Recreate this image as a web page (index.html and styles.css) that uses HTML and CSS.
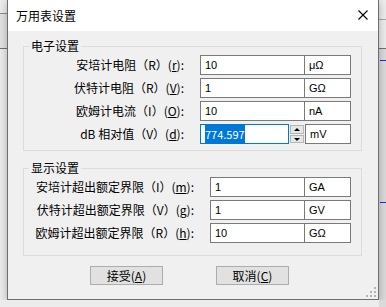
FILE: index.html
```html
<!DOCTYPE html>
<html lang="zh-CN">
<head>
    <meta charset="UTF-8">
    <title>万用表设置</title>
    <link rel="stylesheet" href="styles.css">
</head>
<body>
    <div class="window">

        <div class="titlebar">
            <span class="title">万用表设置</span>
            <svg class="close" width="10" height="10" viewBox="0 0 10 10">
                <path d="M0.5 0.5 L9.5 9.5 M9.5 0.5 L0.5 9.5" stroke="#000" stroke-width="1.1" fill="none"/>
            </svg>
        </div>

        <div class="client">
            <fieldset class="group electric">
                <legend>电子设置</legend>
                <div class="row">
                    <label>安培计电阻（R）(<u>r</u>):</label>
                    <span class="field">10</span>
                    <span class="unit">μΩ</span>
                </div>
                <div class="row">
                    <label>伏特计电阻（R）(<u>V</u>):</label>
                    <span class="field">1</span>
                    <span class="unit">GΩ</span>
                </div>
                <div class="row">
                    <label>欧姆计电流（I）(<u>O</u>):</label>
                    <span class="field">10</span>
                    <span class="unit">nA</span>
                </div>
                <div class="row">
                    <label>dB 相对值（V）(<u>d</u>):</label>
                    <span class="field short focused"><span class="selected">774.597</span></span>
                    <span class="spin">
                        <span class="up"></span>
                        <span class="down"></span>
                    </span>
                    <span class="unit spaced">mV</span>
                </div>
            </fieldset>

            <fieldset class="group display">
                <legend>显示设置</legend>
                <div class="row">
                    <label>安培计超出额定界限（I）(<u>m</u>):</label>
                    <span class="field">1</span>
                    <span class="unit">GA</span>
                </div>
                <div class="row">
                    <label>伏特计超出额定界限（V）(<u>g</u>):</label>
                    <span class="field">1</span>
                    <span class="unit">GV</span>
                </div>
                <div class="row">
                    <label>欧姆计超出额定界限（R）(<u>h</u>):</label>
                    <span class="field">10</span>
                    <span class="unit">GΩ</span>
                </div>
            </fieldset>

            <div class="buttons">
                <button>接受(<u>A</u>)</button>
                <button>取消(<u>C</u>)</button>
            </div>

            <svg class="grip" width="11" height="11" viewBox="0 0 11 11">
                <rect x="8" y="0" width="2" height="2" fill="#b4b4b4"/>
                <rect x="4" y="4" width="2" height="2" fill="#b4b4b4"/>
                <rect x="8" y="4" width="2" height="2" fill="#b4b4b4"/>
                <rect x="0" y="8" width="2" height="2" fill="#b4b4b4"/>
                <rect x="4" y="8" width="2" height="2" fill="#b4b4b4"/>
                <rect x="8" y="8" width="2" height="2" fill="#b4b4b4"/>
            </svg>
        </div>

    </div>
</body>
</html>
```
FILE: styles.css
```css
* {
    font-family: "Noto Sans CJK SC", "Microsoft YaHei", sans-serif;
    box-sizing: border-box;
}

body {
    margin: 0;
    overflow: hidden;
    /* the desktop behind the dialog */
    background:
        linear-gradient(#1f2fe0, #1f2fe0) 380px 60px / 6px 1px no-repeat,
        linear-gradient(#1f2fe0, #1f2fe0) 380px 202px / 6px 1px no-repeat,
        linear-gradient(#8c8c8c, #8c8c8c) 0 13px / 7px 1px no-repeat,
        linear-gradient(#a8a8a8, #a8a8a8) 379px 19px / 7px 1px no-repeat,
        linear-gradient(#707070, #707070) 0 48px / 100% 1px no-repeat,
        linear-gradient(#e2e2e2, #e2e2e2) 0 14px / 7px 34px no-repeat,
        linear-gradient(#dadada, #dadada) 379px 49px / 7px 100% no-repeat,
        #ececec;
}

.window {
    margin-left: 7px;
    width: 372px;
    height: 300px;
    border: 1px solid #6e6e6e;
    border-top: none;
    background: #f0f0f0;
    box-shadow: 0 2px 8px rgba(0, 0, 0, 0.28);
}

.titlebar {
    height: 31px;
    background: white;
    display: flex;
    align-items: center;
    justify-content: space-between;
    padding: 0 10px 1px 8px;
}

.title {
    font-size: 12px;
    color: black;
}

.client {
    position: relative;
    height: 268px;
    padding: 7px 16px 0 15px;
}

.group {
    margin: 0;
    padding: 1px 0 6px 0;
    border: 1px solid #dcdcdc;
    min-width: 0;
}

.group legend {
    font-size: 12px;
    line-height: 16px;
    padding: 0 2px;
    margin-left: 5px;
    color: black;
}

.display {
    margin-top: 9px;
    padding-bottom: 12px;
}

.row {
    display: flex;
    height: 20px;
    margin-bottom: 3px;
    font-size: 12px;
}

.row:last-child {
    margin-bottom: 0;
}

.row label {
    line-height: 20px;
    text-align: right;
    white-space: nowrap;
    color: black;
}

.electric label {
    width: 160px;
    margin-right: 16px;
}

.display label {
    width: 170px;
    margin-right: 16px;
}

.field,
.unit {
    height: 20px;
    border: 1px solid #7a7a7a;
    background: white;
    font-family: "Liberation Sans", Arial, sans-serif;
    font-size: 11px;
    line-height: 18px;
    padding-left: 4px;
    color: black;
}

.electric .field {
    width: 105px;
}

.display .field {
    width: 95px;
}

.unit {
    width: 47px;
    margin-left: -1px;
}

.electric .field.short {
    width: 89px;
}

.focused {
    border-color: #0078d7;
}

.selected {
    background: #0078d7;
    color: white;
    padding: 1px 0 2px 0;
}

.spin {
    width: 14px;
    height: 20px;
    margin-left: 1px;
    display: flex;
    flex-direction: column;
    gap: 1px;
    padding: 1px 0;
}

.spin span {
    flex: 1;
    border: 1px solid #b5b5b5;
    background: #e6e6e6;
    position: relative;
}

.spin .up::after,
.spin .down::after {
    content: "";
    position: absolute;
    left: 3px;
    border-left: 3px solid transparent;
    border-right: 3px solid transparent;
}

.spin .up::after {
    top: 2px;
    border-bottom: 3px solid #000;
}

.spin .down::after {
    top: 2px;
    border-top: 3px solid #000;
}

.unit.spaced {
    margin-left: 1px;
    width: 46px;
}

.buttons {
    display: flex;
    gap: 53px;
    margin-top: 10px;
    padding-left: 67px;
}

button {
    width: 73px;
    height: 19px;
    padding: 0;
    border: 1px solid #adadad;
    background: #e1e1e1;
    font-size: 12px;
    line-height: 17px;
    color: black;
}

.grip {
    position: absolute;
    right: 1px;
    bottom: 1px;
}
```
